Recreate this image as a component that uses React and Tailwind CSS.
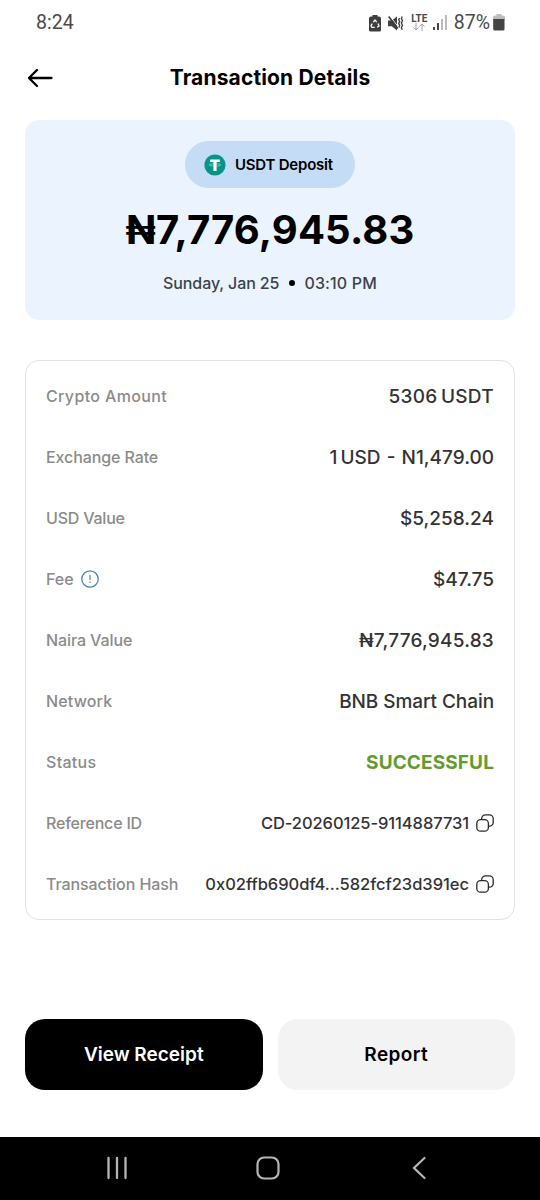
import React from 'react';

const rows = [
  { label: 'Crypto Amount', labelClass: 'tracking-[0.35px]', value: '5306 USDT', valueClass: 'text-[19px] tracking-[0.3px] [word-spacing:-2px]' },
  { label: 'Exchange Rate', labelClass: 'tracking-[-0.1px]', value: '1 USD  -  N1,479.00', valueClass: 'text-[19px] [word-spacing:-2px]' },
  { label: 'USD Value', labelClass: 'tracking-[-0.2px]', value: '$5,258.24', valueClass: 'text-[19px]' },
  { label: 'Fee', labelClass: '', value: '$47.75', valueClass: 'text-[19px]', info: true },
  { label: 'Naira Value', labelClass: 'tracking-[-0.1px]', value: '₦7,776,945.83', valueClass: 'text-[19px] tracking-[0.22px]' },
  { label: 'Network', labelClass: 'tracking-[0.15px]', value: 'BNB Smart Chain', valueClass: 'text-[19px] tracking-[-0.07px]' },
  { label: 'Status', labelClass: 'tracking-[0.3px]', value: 'SUCCESSFUL', valueClass: 'text-[19px] font-bold tracking-[0.12px] text-[#649b2f]' },
  { label: 'Reference ID', labelClass: 'tracking-[-0.2px]', value: 'CD-20260125-9114887731', valueClass: 'text-[16.5px] tracking-[-0.08px]', copy: true },
  { label: 'Transaction Hash', labelClass: 'tracking-[-0.08px]', value: '0x02ffb690df4...582fcf23d391ec', valueClass: 'text-[16.5px] tracking-[-0.03px]', copy: true },
];

function CopyIcon() {
  return (
    <svg className="ml-[7px] h-[18px] w-[18px]" viewBox="0 0 18 18" fill="none" stroke="#2b2b2b" strokeWidth="1.3">
      <rect x="0.8" y="5.6" width="11.6" height="11.6" rx="3.8" />
      <path d="M5.7 5.4V4.6A3.8 3.8 0 0 1 9.5 0.8h3.9a3.8 3.8 0 0 1 3.8 3.8v3.8a3.8 3.8 0 0 1-3.8 3.8h-.8" />
    </svg>
  );
}

function InfoIcon() {
  return (
    <svg className="ml-[7px] h-[18px] w-[18px]" viewBox="0 0 18 18" fill="none">
      <circle cx="9" cy="9" r="8.2" stroke="#4585bd" strokeWidth="1.3" />
      <path d="M9 5v5" stroke="#6f8494" strokeWidth="1.3" />
      <path d="M9 11.4v1.5" stroke="#6f8494" strokeWidth="1.3" />
    </svg>
  );
}

function TetherIcon() {
  return (
    <svg className="h-[22px] w-[22px]" viewBox="0 0 22 22">
      <circle cx="11" cy="11" r="10.6" fill="#099489" />
      <ellipse cx="11" cy="10.9" rx="6" ry="1.2" fill="none" stroke="#b5e0dc" strokeWidth="0.6" />
      <path d="M6.2 5.6h9.6v2.5h-3.2v9H9.4v-9H6.2z" fill="#fff" />
    </svg>
  );
}

function StatusBar() {
  return (
    <div className="flex h-[45px] items-center justify-between pl-9 pr-[35px] text-[#4a4a4a]">
      <span className="font-[Roboto] text-[19.5px] leading-none">8:24</span>
      <div className="flex items-center">
        {/* battery protection */}
        <svg className="mt-[2px] h-[17px] w-[12px]" viewBox="0 0 12 17">
          <path d="M3.5 0h5v1.5H10a2 2 0 0 1 2 2V15a1.5 1.5 0 0 1-1.5 1.5h-9A1.5 1.5 0 0 1 0 15V3.5a2 2 0 0 1 2-2h1.500z" fill="#3f3f3f" />
          <path d="M4.300 7.200 6 5l1.700 2.200M9 8.600l1 2.400-1.800 1.200M5.700 12.300H2.900L2 10.800l1.200-2.200" fill="none" stroke="#fff" strokeWidth="1.3" />
        </svg>
        {/* sound off, vibrate */}
        <svg className="ml-[7px] mt-[2px] h-[17px] w-[16px]" viewBox="0 0 16 17" fill="none">
          <path d="M0 5.5h3.8L9 1.500v14l-5.200-4.200H0z" fill="#3f3f3f" />
          <path d="M1.900 1.100 9.800 11.300" stroke="#fff" strokeWidth="1" />
          <path d="M.7 1.600 9.800 13.400" stroke="#3f3f3f" strokeWidth="1.7" />
          <path d="m11.500 3-.8 1.800 1 1.800-1 1.900 1 1.900-.8 2M14.200 1.500l-.8 2.100 1.100 2.200-1.100 2.200 1.100 2.300-1.100 2.200.8 2.200" stroke="#3f3f3f" strokeWidth="1.4" />
        </svg>
        <div className="ml-[7px] flex w-[17px] flex-col items-center">
          <span className="font-[Roboto] text-[10px] font-bold leading-[9px]">LTE</span>
          <svg className="h-[8px] w-[12px]" viewBox="0 0 12 8" fill="none" stroke="#a0a0a0" strokeWidth="1">
            <path d="M3 0v7M.5 4.500 3 7l2.500-2.500M9 8V1M6.500 3.500 9 1l2.500 2.500" />
          </svg>
        </div>
        <svg className="ml-[5px] h-[15px] w-[15px]" viewBox="0 0 15 15">
          <path d="M0 12h2v3H0zM4 8h2v7H4z" fill="#444" />
          <path d="M8 4h2v11H8zM12 0h2v15h-2z" fill="#bbb" />
        </svg>
        <span className="ml-[6px] font-[Roboto] text-[19.5px] leading-none">87%</span>
        <svg className="ml-[3px] h-[17px] w-[12px]" viewBox="0 0 12 17">
          <path d="M3.500 0h5v1.500H10a2 2 0 0 1 2 2V6H0V3.500a2 2 0 0 1 2-2h1.500z" fill="#bdbdbd" />
          <path d="M.2 5h11.300v10a1.500 1.500 0 0 1-1.500 1.500H1.700A1.500 1.500 0 0 1 .2 15z" fill="#444" />
        </svg>
      </div>
    </div>
  );
}

function DetailRow({ row }) {
  return (
    <div className="flex h-[61px] items-center justify-between whitespace-pre">
      <div className={`flex items-center text-[16px] font-medium text-[#8b8b8b] ${row.labelClass}`}>
        <span>{row.label}</span>
        {row.info && <InfoIcon />}
      </div>
      <div className={`flex items-center font-medium text-[#333] ${row.copy ? '' : 'pt-[2px]'}`}>
        <span className={row.valueClass}>{row.value}</span>
        {row.copy && <CopyIcon />}
      </div>
    </div>
  );
}

export default function App() {
  return (
    <div className="flex h-[1200px] w-[540px] flex-col overflow-hidden bg-white font-[Inter,sans-serif] text-black">
      <StatusBar />

      <header className="grid h-[64px] grid-cols-[50px_1fr_50px] items-center px-[27px] pt-px">
        <svg className="h-[20px] w-[26px]" viewBox="0 0 26 20" fill="none" stroke="#000" strokeWidth="2.3" strokeLinecap="round" strokeLinejoin="round">
          <path d="M24.500 10H2M10 2 2 10l8 8" />
        </svg>
        <h1 className="whitespace-nowrap text-center text-[21px] font-bold tracking-[0.15px]">Transaction Details</h1>
      </header>

      <section className="mx-[25px] mt-[11px] flex h-[200px] flex-col items-center rounded-[14px] bg-[#ebf4fe] pt-[21px]">
        <div className="flex h-[47px] w-[170px] items-center rounded-full bg-[#c4dcf6] pl-[19px]">
          <TetherIcon />
          <span className="ml-[9px] whitespace-nowrap pt-[2px] text-[15px] font-semibold tracking-[-0.22px]">USDT Deposit</span>
        </div>
        <p className="mt-[19px] whitespace-nowrap text-[40px] font-bold leading-[46px] tracking-[0.15px]">₦7,776,945.83</p>
        <p className="mt-[18px] flex items-center whitespace-nowrap text-[16px] font-medium leading-[24px] text-[#3d4249]">
          <span className="tracking-[-0.1px]">Sunday, Jan 25</span>
          <span className="ml-[10px] mr-[9px] h-[6px] w-[6px] rounded-full bg-black" />
          <span className="tracking-[0.15px]">03:10 PM</span>
        </p>
      </section>

      <section className="mx-[25px] mt-[40px] h-[560px] rounded-[14px] border border-[#e2e2e2] px-5 py-[4.5px]">
        {rows.map((row) => (
          <DetailRow key={row.label} row={row} />
        ))}
      </section>

      <div className="mx-[25px] mt-[99px] grid h-[71px] grid-cols-2 gap-[15px] text-[19px] font-semibold">
        <button className="rounded-[20px] bg-black pt-[2px] text-white">View Receipt</button>
        <button className="rounded-[20px] bg-[#f3f3f3] pt-[2px] tracking-[0.4px]">Report</button>
      </div>

      <nav className="mt-auto flex h-[63px] items-center bg-black pb-[2px] pl-[107px] text-[#b5b5b5]">
        <svg className="h-[24px] w-[20px]" viewBox="0 0 20 24" stroke="currentColor" strokeWidth="2.3" strokeLinecap="round">
          <path d="M1.500 2v20M10 2v20M18.500 2v20" />
        </svg>
        <svg className="ml-[129px] h-[24px] w-[24px]" viewBox="0 0 24 24" fill="none" stroke="currentColor" strokeWidth="2.2">
          <rect x="1.500" y="1.500" width="21" height="21" rx="6.500" />
        </svg>
        <svg className="ml-[132px] h-[24px] w-[14px]" viewBox="0 0 14 24" fill="none" stroke="currentColor" strokeWidth="2.2" strokeLinecap="round">
          <path d="M12.500 2 2 12l10.500 10" />
        </svg>
      </nav>
    </div>
  );
}
